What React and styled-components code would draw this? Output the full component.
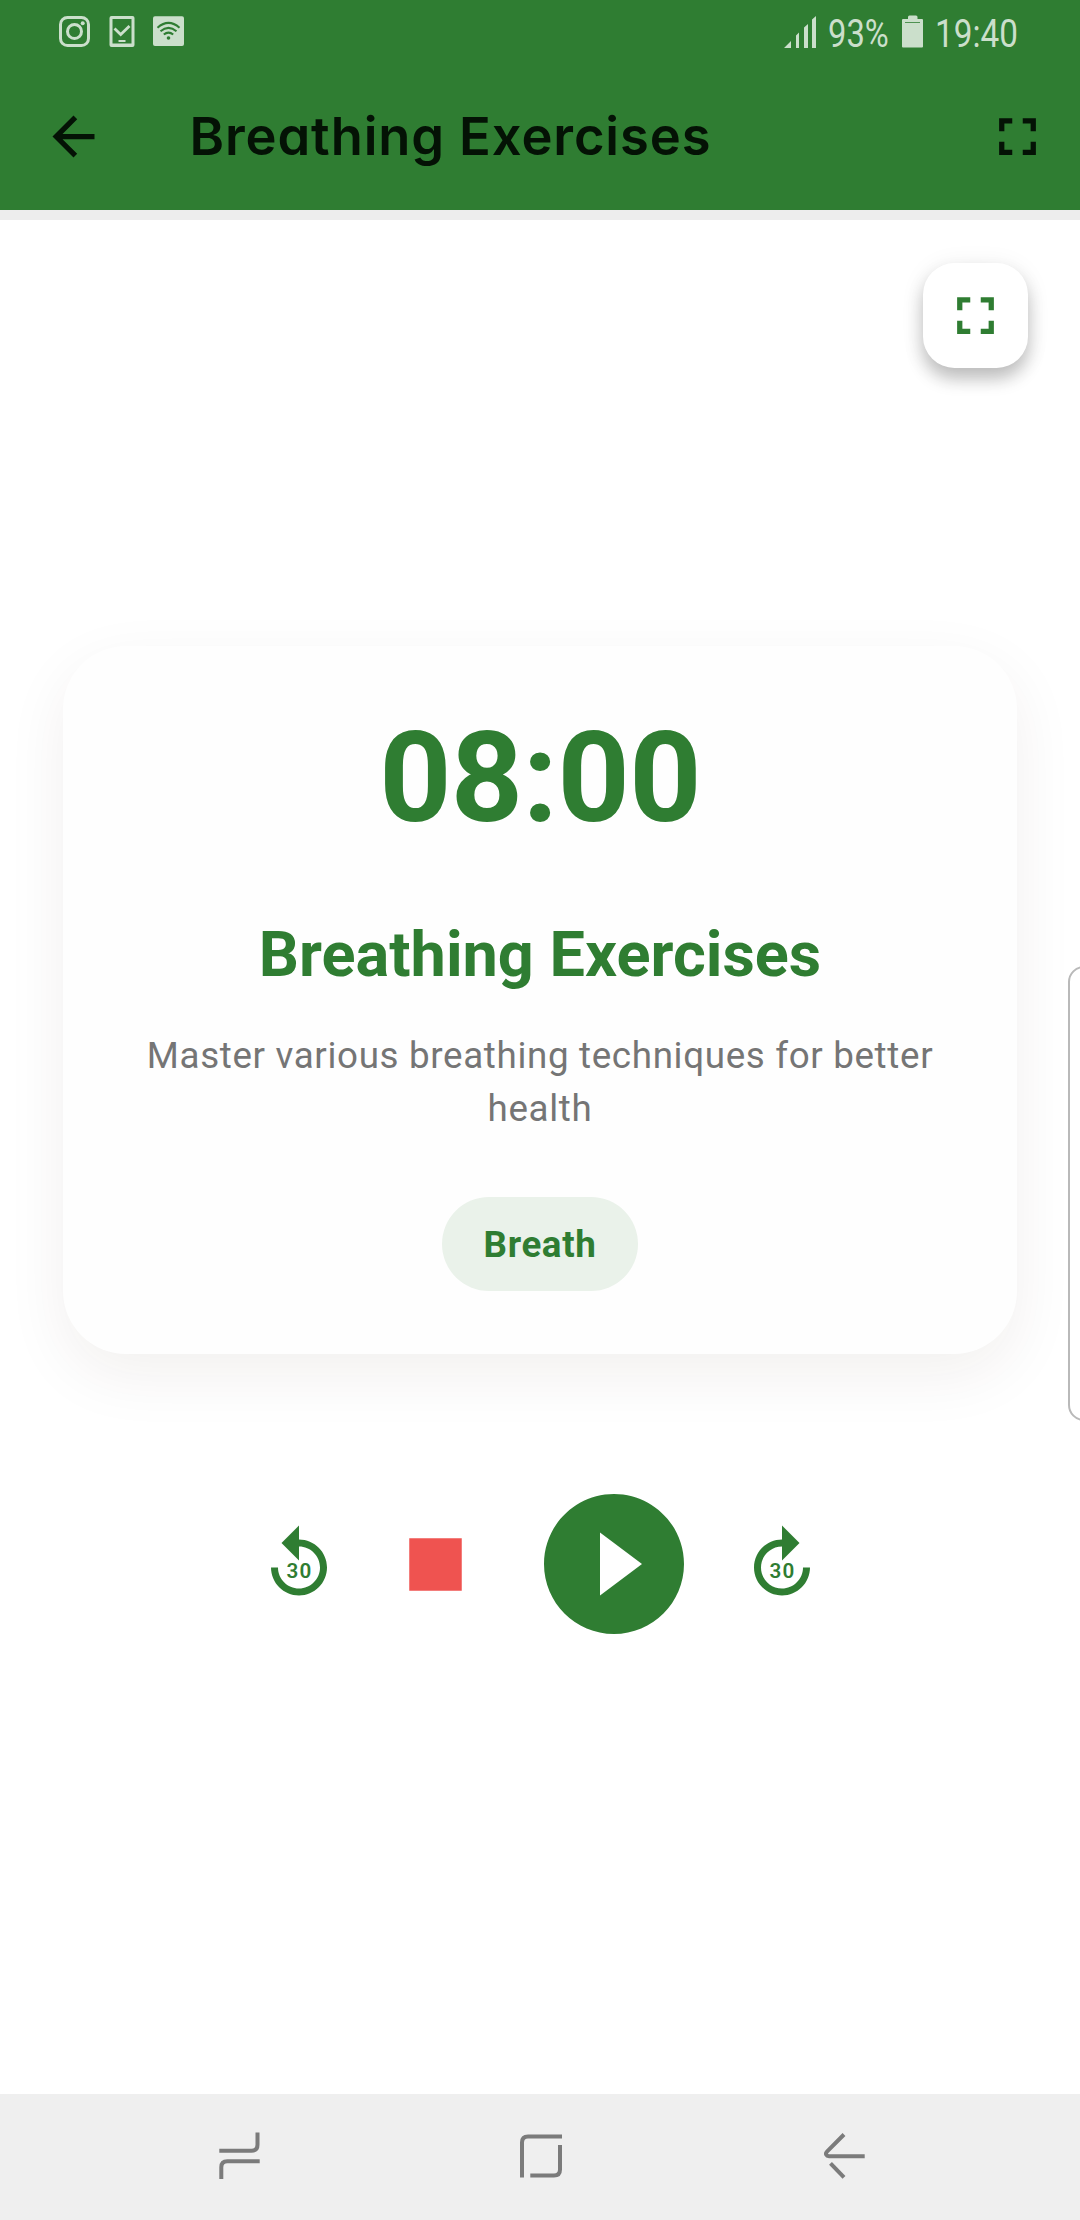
import React from "react";
import styled, { createGlobalStyle } from "styled-components";

const GREEN = "#2f7d32";
const INK = "#041205";
const STATUS = "#cbdfcb";

const GlobalStyle = createGlobalStyle`
  *, *::before, *::after { box-sizing: border-box; }
  body {
    margin: 0;
    background: #fff;
    font-family: Roboto, "Liberation Sans", sans-serif;
  }
  svg { display: block; flex: none; }
`;

const Screen = styled.div`
  position: relative;
  display: flex;
  flex-direction: column;
  width: 1080px;
  height: 2220px;
  overflow: hidden;
  background: #fff;
`;

const Header = styled.header`
  background: ${GREEN};
  border-bottom: 10px solid #ededed;
`;

const StatusBar = styled.div`
  display: flex;
  justify-content: space-between;
  height: 63px;
  padding: 0 63px 0 58px;
`;

const StatusIcons = styled.div`
  display: flex;
  align-items: flex-start;
  gap: 17.5px;
  padding-top: 15px;
`;

const StatusInfo = styled.div`
  display: flex;
  align-items: flex-start;
  padding-top: 15px;
`;

const StatusText = styled.span`
  width: ${(p) => p.$width}px;
  margin: ${(p) => p.$margin};
  color: ${STATUS};
  font-size: 38.5px;
  line-height: 38px;
  white-space: nowrap;
  transform: scaleX(${(p) => p.$scale});
  transform-origin: left center;
`;

const AppBar = styled.div`
  display: flex;
  align-items: center;
  height: 147px;
  padding: 0 31.5px 0 42px;
`;

const BarTitle = styled.h1`
  flex: 1;
  margin: 0 0 0 84.5px;
  color: ${INK};
  font-family: Inter, "Open Sans", sans-serif;
  font-size: 52.5px;
  font-weight: 600;
  font-feature-settings: "cv11";
  letter-spacing: 0.88px;
  line-height: 63px;
  white-space: nowrap;
`;

const IconButton = styled.button`
  display: grid;
  place-items: center;
  flex: none;
  padding: 0;
  border: 0;
  background: none;
  color: ${(p) => p.$color || GREEN};
`;

const Main = styled.main`
  flex: 1;
  display: flex;
  flex-direction: column;
  align-items: center;
  padding: 42.5px 52.5px 0;
`;

const FloatingButton = styled(IconButton)`
  align-self: flex-end;
  width: 105px;
  height: 105px;
  border-radius: 31.5px;
  background: #fff;
  box-shadow: 0 11px 17px rgba(0, 0, 0, 0.23), 0 3px 26px rgba(0, 0, 0, 0.07);
`;

const Card = styled.section`
  display: flex;
  flex-direction: column;
  align-items: center;
  width: 954px;
  margin-top: 278px;
  padding: 63px;
  border-radius: 63px;
  background: #fefefe;
  box-shadow: 0 21px 63px rgba(60, 35, 0, 0.068);
`;

const Timer = styled.div`
  color: ${GREEN};
  font-size: 126px;
  font-weight: 700;
  line-height: 138px;
  letter-spacing: -0.6px;
`;

const CardTitle = styled.h2`
  margin: 66px 0 0;
  color: ${GREEN};
  font-size: 63px;
  font-weight: 700;
  line-height: 84px;
  white-space: nowrap;
`;

const Description = styled.p`
  margin: 33.5px 0 0;
  color: #757575;
  font-size: 36.75px;
  letter-spacing: 0.66px;
  line-height: 52.5px;
  text-align: center;
`;

const Tag = styled.span`
  margin-top: 61.5px;
  padding: 22px 42px 20px;
  border-radius: 52.5px;
  background: #eaf2ea;
  color: ${GREEN};
  font-size: 36.75px;
  font-weight: 700;
  letter-spacing: 0.62px;
  line-height: 52px;
`;

const Controls = styled.div`
  display: flex;
  align-items: center;
  gap: 42px;
  margin-top: 126.75px;
`;

const NavBar = styled.nav`
  display: flex;
  align-items: center;
  justify-content: space-between;
  height: 126px;
  padding: 0 210px;
  background: #efefef;
`;

const EdgeHandle = styled.div`
  position: absolute;
  top: 966px;
  right: -20px;
  width: 32px;
  height: 455px;
  border: 2px solid #b9b9b9;
  border-radius: 16px;
  background: #fff;
`;

const BackIcon = () => (
  <svg width="63" height="63" viewBox="0 0 24 24" fill="currentColor">
    <path d="M20 11H7.83l5.59-5.59L12 4l-8 8 8 8 1.41-1.41L7.83 13H20v-2z" />
  </svg>
);

const FullscreenIcon = () => (
  <svg width="63" height="63" viewBox="0 0 24 24" fill="currentColor">
    <path d="M7 14H5v5h5v-2H7v-3zm-2-4h2V7h3V5H5v5zm12 7h-3v2h5v-5h-2v3zM14 5v2h3v3h2V5h-5z" />
  </svg>
);

const SkipLabel = styled.text`
  font-family: Roboto, sans-serif;
  font-size: 5.9px;
  font-weight: 600;
  letter-spacing: 0.32px;
  text-anchor: middle;
`;

const SkipIcon = ({ forward }) => (
  <svg width="84" height="84" viewBox="0 0 24 24" fill="currentColor">
    <path
      transform={forward ? "matrix(-1 0 0 1 24 0)" : undefined}
      d="M12 5V1L7 6l5 5V7c3.3 0 6 2.7 6 6s-2.7 6-6 6-6-2.7-6-6H4c0 4.4 3.6 8 8 8s8-3.6 8-8-3.6-8-8-8z"
    />
    <SkipLabel x="12.15" y="15.98">30</SkipLabel>
  </svg>
);

const StopIcon = () => (
  <svg width="105" height="105" viewBox="0 0 24 24" fill="currentColor">
    <path d="M6 6h12v12H6z" />
  </svg>
);

const PlayIcon = () => (
  <svg width="168" height="168" viewBox="0 0 24 24" fill="currentColor">
    <path d="M12 2C6.48 2 2 6.48 2 12s4.48 10 10 10 10-4.48 10-10S17.52 2 12 2zm-2 14.5v-9l6 4.5-6 4.5z" />
  </svg>
);

const InstagramIcon = () => (
  <svg width="33" height="33" viewBox="0 0 33 33" fill="none" stroke={STATUS}>
    <rect x="2.5" y="2.5" width="28" height="28" rx="7" strokeWidth="3" />
    <circle cx="16.5" cy="16.5" r="7" strokeWidth="3" />
    <circle cx="24.7" cy="8.3" r="2" fill={STATUS} stroke="none" />
  </svg>
);

const DeviceCheckIcon = () => (
  <svg width="26" height="33" viewBox="0 0 26 33" fill="none" stroke={STATUS}>
    <path d="M.5 3q0-2 2-2h21q2 0 2 2v27q0 2-2 2H2.500q-2 0-2-2zM3.500 4v24.500h19V4z" fill={STATUS} fillRule="evenodd" stroke="none" />
    <path d="M5.5 13.5l6.2 6L20.5 11" strokeWidth="2.8" />
    <path d="M9.5 26h7" strokeWidth="2" />
  </svg>
);

const WifiBadgeIcon = () => (
  <svg width="33" height="33" viewBox="0 0 33 33" fill="none">
    <rect x="1" y="1.3" width="31" height="29.7" rx="2" fill={STATUS} />
    <g stroke={GREEN} strokeWidth="2">
      <path d="M5.5 12.7q11-9.6 22 0" />
      <path d="M8.5 16.3q8-6.8 16 0" />
      <path d="M11.8 19.6q4.7-4 9.4 0" />
    </g>
    <circle cx="16.5" cy="23" r="1.8" fill={GREEN} />
  </svg>
);

const SignalIcon = () => (
  <svg width="32" height="33" viewBox="0 0 32 33" fill={STATUS}>
    <path d="M0 33l7-7v7zM12 20.500l3-3V33h-3zM20 12.500l4-3.500V33h-4zM28 4.500l4-3.500V33h-4z" />
  </svg>
);

const BatteryIcon = () => (
  <svg width="21" height="33" viewBox="0 0 21 33">
    <path d="M6 4V2q0-1.500 1.500-1.500h6.500q1.500 0 1.500 1.500v2H20q1 0 1 1v26.500q0 1-1 1H1q-1 0-1-1V5q0-1 1-1z" fill={STATUS} />
    <path d="M3 7.500h15" stroke={GREEN} strokeWidth="0.8" />
  </svg>
);

const NavIcon = styled.svg`
  fill: none;
  stroke: #7b7b7b;
  stroke-width: 4;
`;

export default function App() {
  return (
    <Screen>
      <GlobalStyle />
      <Header>
        <StatusBar>
          <StatusIcons>
            <InstagramIcon />
            <DeviceCheckIcon />
            <WifiBadgeIcon />
          </StatusIcons>
          <StatusInfo>
            <SignalIcon />
            <StatusText $width={62} $scale={0.85} $margin="0 12px">93%</StatusText>
            <BatteryIcon />
            <StatusText $width={82} $scale={0.865} $margin="0 0 0 12px">19:40</StatusText>
          </StatusInfo>
        </StatusBar>
        <AppBar>
          <IconButton $color={INK} aria-label="Back"><BackIcon /></IconButton>
          <BarTitle>Breathing Exercises</BarTitle>
          <IconButton $color={INK} aria-label="Fullscreen"><FullscreenIcon /></IconButton>
        </AppBar>
      </Header>

      <Main>
        <FloatingButton aria-label="Fullscreen"><FullscreenIcon /></FloatingButton>
        <Card>
          <Timer>08:00</Timer>
          <CardTitle>Breathing Exercises</CardTitle>
          <Description>Master various breathing techniques for better health</Description>
          <Tag>Breath</Tag>
        </Card>
        <Controls>
          <IconButton aria-label="Back 30 seconds"><SkipIcon /></IconButton>
          <IconButton $color="#ef5350" aria-label="Stop"><StopIcon /></IconButton>
          <IconButton aria-label="Play"><PlayIcon /></IconButton>
          <IconButton aria-label="Forward 30 seconds"><SkipIcon forward /></IconButton>
        </Controls>
      </Main>

      <NavBar>
        <NavIcon width="60" height="60" viewBox="210 2127 60 60">
          <path d="M219.300 2150.700H251.500q6 0 6-6V2132.500" />
          <path d="M259.700 2161.300H227.300q-6 0-6 6V2179" />
        </NavIcon>
        <NavIcon width="60" height="60" viewBox="510 2127 60 60">
          <path d="M522 2177.500V2142.500q0-6 6-6H562" />
          <path d="M560 2145V2169.500q0 6-6 6H530.300" />
        </NavIcon>
        <NavIcon width="60" height="60" viewBox="810 2127 60 60">
          <path d="M844 2134.500L827.200 2151.300c-2.500 2.500-.8 4.900 1.800 4.900H864.700" />
          <path d="M830.500 2163.300L844 2177.300" />
        </NavIcon>
      </NavBar>
      <EdgeHandle />
    </Screen>
  );
}
